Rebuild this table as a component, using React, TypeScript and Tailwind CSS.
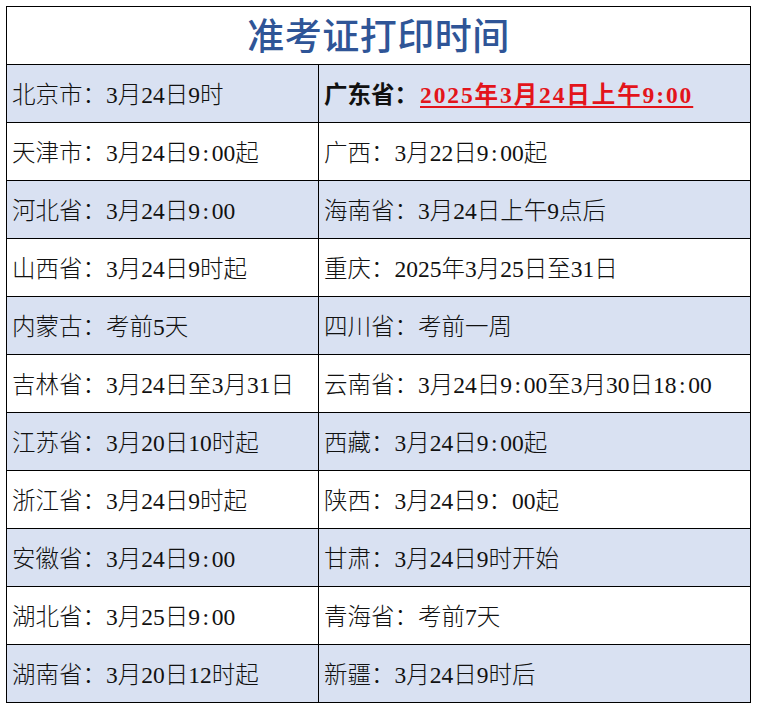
import React from "react";

const rows: [string, string][] = [
  ["北京市：3月24日9时", ""],
  ["天津市：3月24日9:00起", "广西：3月22日9:00起"],
  ["河北省：3月24日9:00", "海南省：3月24日上午9点后"],
  ["山西省：3月24日9时起", "重庆：2025年3月25日至31日"],
  ["内蒙古：考前5天", "四川省：考前一周"],
  ["吉林省：3月24日至3月31日", "云南省：3月24日9:00至3月30日18:00"],
  ["江苏省：3月20日10时起", "西藏：3月24日9:00起"],
  ["浙江省：3月24日9时起", "陕西：3月24日9：00起"],
  ["安徽省：3月24日9:00", "甘肃：3月24日9时开始"],
  ["湖北省：3月25日9:00", "青海省：考前7天"],
  ["湖南省：3月20日12时起", "新疆：3月24日9时后"],
];

const font = { fontFamily: '"Liberation Serif", "Noto Sans CJK SC", serif' };

// half-width colons are as wide as a digit in the original sheet font
function withColons(text: string) {
  return text.split(/(:)/).map((part, i) =>
    part === ":" ? (
      <span key={i} className="inline-block w-[0.5em] text-center">
        :
      </span>
    ) : (
      <React.Fragment key={i}>{part}</React.Fragment>
    )
  );
}

export default function App() {
  return (
    <div className="w-[758px] h-[709px] bg-white pt-[6px] pl-[6px]" style={font}>
      <div className="w-[745px] grid grid-cols-[312px_432px] border-l border-t border-black">
        <div className="col-span-2 h-[58px] border-r border-b border-black flex items-center justify-center pt-[4px]">
          <span className="text-[37px] font-medium text-[#2f5597] tracking-[0.5px]">准考证打印时间</span>
        </div>
        {rows.map(([left, right], i) => {
          const bg = i % 2 === 0 ? "bg-[#d9e1f2]" : "bg-white";
          return (
            <React.Fragment key={i}>
              <div className={`h-[58px] border-r border-b border-black ${bg} flex items-center pl-[5px] pt-[5px] text-[23.5px] font-light text-[#111] whitespace-nowrap`}>
                {withColons(left)}
              </div>
              <div className={`h-[58px] border-r border-b border-black ${bg} flex items-center pl-[5px] pt-[5px] text-[23.5px] font-light text-[#111] whitespace-nowrap`}>
                {i === 0 ? (
                  <>
                    <span className="font-bold">广东省：</span>
                    <span className="ml-[2px] font-bold text-[#e3141b] tracking-[1.9px] underline decoration-2 underline-offset-[3px]">
                      2025年3月24日上午9:00
                    </span>
                  </>
                ) : (
                  withColons(right)
                )}
              </div>
            </React.Fragment>
          );
        })}
      </div>
    </div>
  );
}
